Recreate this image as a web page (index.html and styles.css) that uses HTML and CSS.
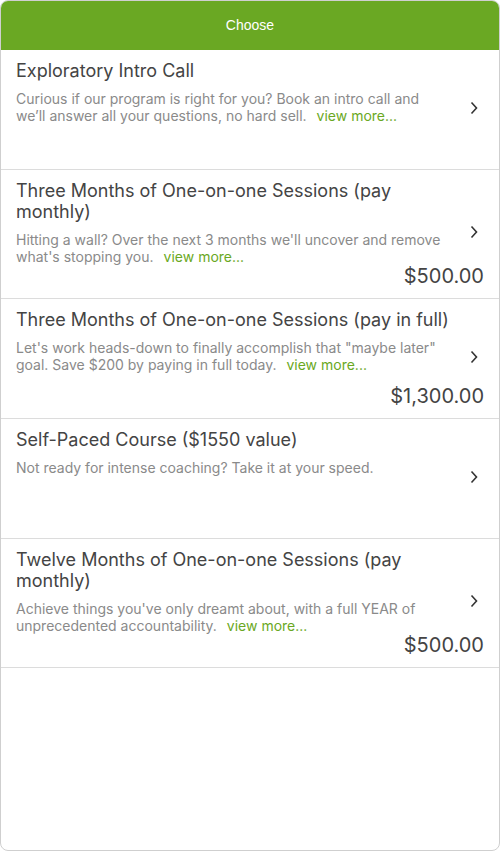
FILE: index.html
```html
<!DOCTYPE html>
<html>
<head>
<meta charset="utf-8">
<link rel="stylesheet" href="styles.css">
</head>
<body>
<div class="panel">
  <div class="header">Choose</div>
  <div class="list">
    <div class="item">
      <div class="text">
        <div class="title">Exploratory Intro Call</div>
        <div class="desc">Curious if our program is right for you? Book an intro call and we’ll answer all your questions, no hard sell.<span class="more">view more...</span></div>
      </div>
      <svg class="chev" width="8" height="14" viewBox="0 0 8 14"><path d="M1.5 1.5 L6.5 7 L1.5 12.5" fill="none" stroke="#333" stroke-width="1.6"/></svg>
    </div>
    <div class="item">
      <div class="text">
        <div class="title">Three Months of One-on-one Sessions (pay monthly)</div>
        <div class="desc">Hitting a wall? Over the next 3 months we'll uncover and remove what's stopping you.<span class="more">view more...</span></div>
      </div>
      <div class="price">$500.00</div>
      <svg class="chev" width="8" height="14" viewBox="0 0 8 14"><path d="M1.5 1.5 L6.5 7 L1.5 12.5" fill="none" stroke="#333" stroke-width="1.6"/></svg>
    </div>
    <div class="item">
      <div class="text">
        <div class="title">Three Months of One-on-one Sessions (pay in full)</div>
        <div class="desc">Let's work heads-down to finally accomplish that "maybe later" goal. Save $200 by paying in full today.<span class="more">view more...</span></div>
      </div>
      <div class="price">$1,300.00</div>
      <svg class="chev" width="8" height="14" viewBox="0 0 8 14"><path d="M1.5 1.5 L6.5 7 L1.5 12.5" fill="none" stroke="#333" stroke-width="1.6"/></svg>
    </div>
    <div class="item">
      <div class="text">
        <div class="title">Self-Paced Course ($1550 value)</div>
        <div class="desc">Not ready for intense coaching? Take it at your speed.</div>
      </div>
      <svg class="chev" width="8" height="14" viewBox="0 0 8 14"><path d="M1.5 1.5 L6.5 7 L1.5 12.5" fill="none" stroke="#333" stroke-width="1.6"/></svg>
    </div>
    <div class="item">
      <div class="text">
        <div class="title">Twelve Months of One-on-one Sessions (pay monthly)</div>
        <div class="desc">Achieve things you've only dreamt about, with a full YEAR of unprecedented accountability.<span class="more">view more...</span></div>
      </div>
      <div class="price">$500.00</div>
      <svg class="chev" width="8" height="14" viewBox="0 0 8 14"><path d="M1.5 1.5 L6.5 7 L1.5 12.5" fill="none" stroke="#333" stroke-width="1.6"/></svg>
    </div>
  </div>
</div>
</body>
</html>
```

FILE: styles.css
```css
* { box-sizing: border-box; }
html, body {
  margin: 0;
  padding: 0;
  background: #fff;
}
.panel {
  width: 500px;
  height: 851px;
  border: 1px solid #cfcfcf;
  border-radius: 8px;
  overflow: hidden;
  display: flex;
  flex-direction: column;
  font-family: Inter, "Noto Sans", sans-serif;
}
.header {
  height: 49px;
  flex-shrink: 0;
  background: #6aa823;
  color: #fff;
  font-family: "Liberation Sans", Arial, sans-serif;
  font-size: 14px;
  display: flex;
  align-items: center;
  justify-content: center;
  padding-bottom: 2px;
}
.item {
  display: grid;
  grid-template-columns: 1fr 33px;
  grid-template-rows: 1fr auto;
  min-height: 120px;
  padding: 10px 15px 11px 15px;
  border-bottom: 1px solid #dcdcdc;
}
.text {
  grid-column: 1;
  grid-row: 1;
}
.title {
  font-size: 18px;
  line-height: 21px;
  color: #444;
  margin-bottom: 9px;
}
.desc {
  font-size: 14px;
  line-height: 17px;
  color: #8a8a8a;
}
.more {
  color: #6aa823;
  margin-left: 10px;
}
.price {
  grid-column: 1 / 3;
  grid-row: 2;
  justify-self: end;
  font-size: 20px;
  line-height: 22px;
  color: #444;
}
.chev {
  grid-column: 2;
  grid-row: 1 / 3;
  align-self: center;
  justify-self: end;
  margin-right: 6px;
  margin-bottom: 3px;
}
```
